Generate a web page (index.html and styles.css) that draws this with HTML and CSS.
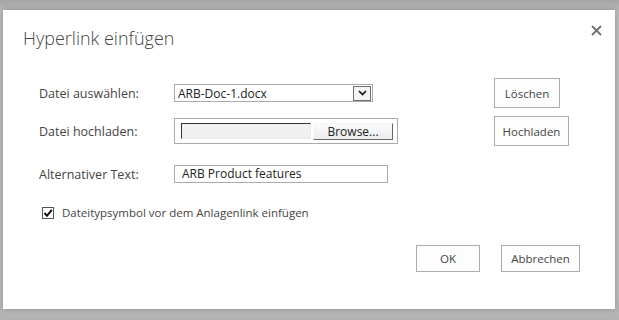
FILE: index.html
```html
<!DOCTYPE html>
<html lang="de">
  <head>
    <meta charset="UTF-8" />
    <meta name="viewport" content="width=device-width,initial-scale=1.0" />
    <title>Hyperlink einfügen</title>
    <link rel="stylesheet" href="styles.css">
  </head>
  <body>
    <div class="dialog">
      <header>
        <h1>Hyperlink einfügen</h1>
        <div class="close">
          <svg width="11" height="11" viewBox="0 0 11 11">
            <path d="M1 1 L10 10 M10 1 L1 10" stroke="#707070" stroke-width="1.8" />
          </svg>
        </div>
      </header>

      <div class="form">
        <div class="row row-select">
          <label>Datei auswählen:</label>
          <div class="field">
            <div class="select">
              <span class="select-text">ARB-Doc-1.docx</span>
              <span class="select-arrow">
                <svg width="9" height="6" viewBox="0 0 9 6">
                  <path d="M1 1 L4.5 4.5 L8 1" stroke="#111" stroke-width="1.6" fill="none" />
                </svg>
              </span>
            </div>
          </div>
          <div class="btn">Löschen</div>
        </div>

        <div class="row row-file">
          <label>Datei hochladen:</label>
          <div class="field">
            <div class="file">
              <div class="file-path"></div>
              <div class="browse">Browse...</div>
            </div>
          </div>
          <div class="btn">Hochladen</div>
        </div>

        <div class="row row-alt">
          <label>Alternativer Text:</label>
          <div class="field">
            <div class="text-input">ARB Product features</div>
          </div>
        </div>

        <div class="check-row">
          <span class="checkbox">
            <svg width="10" height="10" viewBox="0 0 10 10">
              <path d="M1.5 5 L4 7.8 L8.8 1.8" stroke="#111" stroke-width="2" fill="none" />
            </svg>
          </span>
          <span>Dateitypsymbol vor dem Anlagenlink einfügen</span>
        </div>
      </div>

      <footer>
        <div class="btn btn-ok">OK</div>
        <div class="btn btn-cancel">Abbrechen</div>
      </footer>
    </div>
  </body>
</html>
```

FILE: styles.css
```css
* {
  padding: 0;
  margin: 0;
  box-sizing: border-box;
}
body {
  width: 619px;
  height: 320px;
  overflow: hidden;
  background: linear-gradient(#a4a4a4, #bdbdbd 12px, #bdbdbd 300px, #b2b2b2);
  font-family: 'Open Sans', sans-serif;
  color: #444;
  padding: 10px 0 0 3px;
}
.dialog {
  width: 612px;
  height: 299px;
  background: #fff;
  box-shadow: 0 0 6px rgba(0, 0, 0, 0.25);
  position: relative;
}
header {
  display: flex;
  justify-content: space-between;
  align-items: flex-start;
  padding: 15px 13px 0 20px;
  height: 68px;
}
h1 {
  font-size: 18px;
  font-weight: 300;
  color: #444;
  line-height: 26px;
}
.close {
  margin-top: 0;
  width: 11px;
  height: 11px;
  display: flex;
}
.form {
  padding-left: 36px;
  font-size: 12.5px;
}
.row {
  display: grid;
  grid-template-columns: 135px 320px auto;
  align-items: center;
  height: 30px;
}
.row-file {
  margin-top: 8px;
}
.row-alt {
  margin-top: 16px;
  height: 24px;
}
label {
  color: #444;
}
.select {
  width: 199px;
  height: 18px;
  border: 1px solid #aaa;
  display: flex;
  align-items: center;
  justify-content: space-between;
  padding: 0 1px 0 3px;
  font-size: 12px;
  color: #222;
}
.select-arrow {
  width: 18px;
  height: 15px;
  border: 1px solid #6f6f6f;
  background: #f4f4f4;
  display: flex;
  align-items: center;
  justify-content: center;
}
.file {
  width: 224px;
  height: 26px;
  border: 1px solid #aaa;
  display: flex;
  align-items: center;
  padding-left: 6px;
  gap: 2px;
}
.file-path {
  width: 130px;
  height: 16px;
  background: #f0f0f0;
  border: 1px solid #e8e8e8;
  border-top-color: #333;
  border-left-color: #333;
}
.browse {
  width: 80px;
  height: 17px;
  background: linear-gradient(#fbfbfb, #ececec);
  border: 1px solid #f6f6f6;
  border-right-color: #666;
  border-bottom-color: #666;
  font-size: 12px;
  color: #222;
  text-align: center;
  line-height: 15px;
}
.text-input {
  width: 214px;
  height: 18px;
  border: 1px solid #aaa;
  padding-left: 7px;
  font-size: 12px;
  line-height: 16px;
  color: #222;
}
.btn {
  height: 30px;
  border: 1px solid #ababab;
  background: #fdfdfd;
  color: #444;
  font-size: 11.5px;
  display: flex;
  align-items: center;
  justify-content: center;
  width: 66px;
}
.row-file .btn {
  width: 75px;
}
.check-row {
  display: flex;
  align-items: center;
  gap: 8px;
  margin-top: 19px;
  padding-left: 3px;
  font-size: 11.5px;
}
.checkbox {
  width: 12px;
  height: 12px;
  border: 1px solid #555;
  display: flex;
  align-items: center;
  justify-content: center;
}
footer {
  display: flex;
  justify-content: flex-end;
  gap: 21px;
  padding-right: 35px;
  margin-top: 25px;
}
.btn-ok {
  width: 64px;
  height: 27px;
}
.btn-cancel {
  width: 79px;
  height: 27px;
}
```
